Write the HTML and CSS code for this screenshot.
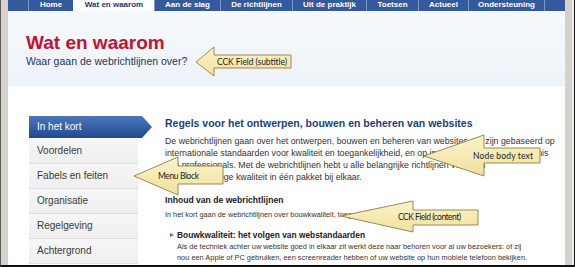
FILE: index.html
```html
<!DOCTYPE html>
<html lang="nl">
<head>
    <meta charset="UTF-8">
    <title>Wat en waarom</title>
    <link rel="stylesheet" href="styles.css">
</head>
<body>
<div class="frame">
    <div class="page">
        <ul class="nav">
            <li class="nav-gap"></li>
            <li class="tab t-home">Home</li>
            <li class="tab t-wat active">Wat en waarom</li>
            <li class="tab t-aan">Aan de slag</li>
            <li class="tab t-richt">De richtlijnen</li>
            <li class="tab t-uit">Uit de praktijk</li>
            <li class="tab t-toets">Toetsen</li>
            <li class="tab t-actueel">Actueel</li>
            <li class="tab t-onder">Ondersteuning</li>
            <li class="tab nav-end"></li>
        </ul>

        <div class="header">
            <h1>Wat en waarom</h1>
            <p class="subtitle">Waar gaan de webrichtlijnen over?</p>
        </div>

        <div class="content">
            <ul class="menu">
                <li class="active">In het kort</li>
                <li>Voordelen</li>
                <li>Fabels en feiten</li>
                <li>Organisatie</li>
                <li>Regelgeving</li>
                <li>Achtergrond</li>
            </ul>

            <div class="main">
                <h2>Regels voor het ontwerpen, bouwen en beheren van websites</h2>
                <p class="intro">De webrichtlijnen gaan over het ontwerpen, bouwen en beheren van websites. Ze zijn gebaseerd op<br>
                internationale standaarden voor kwaliteit en toegankelijkheid, en op in de praktijk opgedane kennis<br>
                van professionals. Met de webrichtlijnen hebt u alle belangrijke richtlijnen voor een<br>
                website van hoge kwaliteit in één pakket bij elkaar.</p>

                <h3>Inhoud van de webrichtlijnen</h3>
                <p class="small">In het kort gaan de webrichtlijnen over bouwkwaliteit, toegankelijkheid en duurzaamheid.</p>

                <ul class="topics">
                    <li>
                        <strong>Bouwkwaliteit: het volgen van webstandaarden</strong>
                        <p>Als de techniek achter uw website goed in elkaar zit werkt deze naar behoren voor al uw bezoekers: of zij<br>
                        nou een Apple of PC gebruiken, een screenreader hebben of uw website op hun mobiele telefoon bekijken.</p>
                    </li>
                </ul>
            </div>
        </div>
    </div>

    <!-- callouts -->
    <svg class="callout c-subtitle" width="98" height="32">
        <defs>
            <linearGradient id="fill" x1="0" y1="0" x2="0" y2="1">
                <stop offset="0" stop-color="#fbf3cc"/>
                <stop offset="1" stop-color="#f1e09c"/>
            </linearGradient>
        </defs>
        <polygon points="1,16 19,1 19,9 96,9 96,22 19,22 19,30"/>
        <text x="22" y="19" textLength="70">CCK Field (subtitle)</text>
    </svg>
    <svg class="callout c-menu" width="92" height="41">
        <polygon points="1,20 45,1 45,10 90,10 90,28 45,28 45,39"/>
        <text x="25" y="23" textLength="41">Menu Block</text>
    </svg>
    <svg class="callout c-node" width="119" height="44">
        <polygon points="1,22 61,1 61,14 117,14 117,29 61,29 61,42"/>
        <text x="50" y="25" textLength="60">Node body text</text>
    </svg>
    <svg class="callout c-content" width="140" height="34">
        <polygon points="1,16 73,1 73,10 138,10 138,25 73,25 73,32"/>
        <text x="58" y="20" textLength="63">CCK Field (content)</text>
    </svg>
</div>
</body>
</html>
```

FILE: styles.css
```css
* {
    box-sizing: border-box;
}
body {
    margin: 0;
    font-family: "Liberation Sans", Arial, sans-serif;
}
ul {
    margin: 0;
    padding: 0;
    list-style: none;
}
.frame {
    position: relative;
    width: 575px;
    height: 267px;
    background: #d5d2cb;
    border-left: 1px solid #5a5a5a;
    border-right: 1px solid #1a1a1a;
    border-bottom: 2px solid #111;
    padding: 0 9px 0 7px;
    box-shadow: inset -2px 0 #eeece8;
    overflow: hidden;
}
.page {
    background: #fff;
    height: 265px;
    overflow: hidden;
}

/* top navigation */
.nav {
    display: flex;
    height: 11px;
    background: #34599d;
}
.nav-gap {
    width: 20px;
}
.tab {
    border-left: 1px solid #7d96c4;
    color: #fff;
    font-size: 8px;
    font-weight: bold;
    line-height: 9px;
    text-align: center;
    white-space: nowrap;
}
.tab.active {
    background: #fff;
    color: #1c3a70;
    border-left-color: #fff;
}
.t-home { width: 45px; }
.t-wat { width: 81px; }
.t-aan { width: 66px; }
.t-richt { width: 72px; }
.t-uit { width: 74px; }
.t-toets { width: 52px; }
.t-actueel { width: 50px; }
.t-onder { width: 76px; }
.nav-end { flex: 1; }

/* page header */
.header {
    height: 76px;
    padding: 21px 0 0 18px;
    background: linear-gradient(#f6f9fc, #eef3f9);
    border-bottom: 1px solid #f7f9fc;
}
.header h1 {
    margin: 0;
    color: #c8102e;
    font-size: 19px;
    line-height: 22px;
}
.subtitle {
    margin: 1px 0 0;
    color: #1b355f;
    font-size: 10.5px;
    line-height: 13px;
}

/* body */
.content {
    display: flex;
    padding: 29px 0 0 21px;
}
.menu {
    width: 123px;
    flex: none;
}
.menu li {
    width: 109px;
    height: 25px;
    padding-left: 8px;
    background: linear-gradient(#f6f6f6, #efefef);
    border-bottom: 1px solid #dedede;
    color: #3a3a3a;
    font-size: 10px;
    line-height: 24px;
}
.menu li.active {
    width: 123px;
    height: 22px;
    line-height: 22px;
    border: 0;
    margin-bottom: 1px;
    background: linear-gradient(#4a76bb, #214b8f);
    color: #fff;
    clip-path: polygon(0 0, 113px 0, 123px 50%, 113px 100%, 0 100%);
}
.main {
    margin-left: 13px;
    color: #333;
}
.main h2 {
    margin: 0;
    color: #1d3e7a;
    font-size: 10.5px;
    line-height: 14px;
}
.intro {
    margin: 5px 0 0;
    font-size: 8.8px;
    line-height: 12px;
    white-space: nowrap;
}
.main h3 {
    margin: 11px 0 0;
    color: #222;
    font-size: 8.6px;
    line-height: 12px;
}
.small {
    margin: 4px 0 0;
    color: #333;
    font-size: 7.3px;
    line-height: 10px;
    white-space: nowrap;
}
.topics {
    margin-top: 10px;
    padding-left: 12px;
}
.topics li {
    position: relative;
}
.topics li::before {
    content: "";
    position: absolute;
    left: -7px;
    top: 3px;
    border-left: 4px solid #4a6fae;
    border-top: 2.5px solid transparent;
    border-bottom: 2.5px solid transparent;
}
.topics strong {
    display: block;
    color: #222;
    font-size: 8.4px;
    line-height: 11px;
}
.topics p {
    margin: 0;
    color: #333;
    font-size: 7.4px;
    line-height: 11px;
    white-space: nowrap;
}

/* yellow callout arrows */
.callout {
    position: absolute;
}
.callout polygon {
    fill: url(#fill);
    stroke: #9c8b4e;
    stroke-width: 1;
}
.callout text {
    font-family: Lato, "Open Sans", sans-serif;
    font-size: 8.5px;
    fill: #222;
}
.c-subtitle { left: 194px; top: 46px; }
.c-menu { left: 132px; top: 156px; }
.c-node { left: 422px; top: 134px; }
.c-content { left: 339px; top: 200px; }
```
